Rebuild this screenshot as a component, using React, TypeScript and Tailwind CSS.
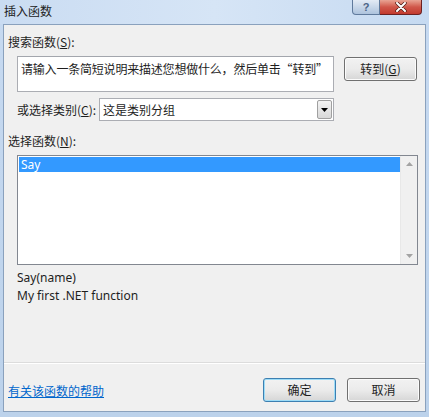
const cjk = "font-['Microsoft_YaHei','Noto_Sans_CJK_SC',sans-serif]";

const Btn = ({ children, focused = false }: { children: React.ReactNode; focused?: boolean }) => (
  <button
    className={`w-[73px] h-[24px] rounded-[3px] border text-[12px] text-[#1e1e1e] bg-gradient-to-b from-[#f2f2f2] via-[#ebebeb] to-[#d6d6d6] ${
      focused ? "border-[#3c7fb1] shadow-[inset_0_0_0_1px_#9ddcf7]" : "border-[#707070] shadow-[inset_0_0_0_1px_#fbfbfb]"
    }`}
  >
    {children}
  </button>
);

export default function App() {
  return (
    <div className={`w-[429px] h-[417px] flex flex-col bg-gradient-to-b from-[#c7daf1] to-[#bcd2eb] ${cjk} text-[12px] text-[#1e1e1e]`}>
      {/* Title bar */}
      <div className="h-[24px] flex items-start justify-between pl-[4px] pr-[7px] bg-gradient-to-r from-[#cadcf2] via-[#d6e5f6] to-[#c6daf1]">
        <span className="mt-[3px] leading-[16px] text-[12px] text-[#222]">插入函数</span>
        <div className="flex">
          <div className="w-[28px] h-[15px] rounded-bl-[4px] border border-t-0 border-[#5f7a9c] bg-gradient-to-b from-[#e3ebf5] to-[#adc3dd] flex items-center justify-center text-[11px] font-bold text-[#4b6486] leading-none font-['Liberation_Sans',sans-serif]">
            ?
          </div>
          <div className="w-[42px] h-[15px] rounded-br-[4px] border border-t-0 border-l-0 border-[#6b2121] bg-gradient-to-b from-[#e8a494] via-[#d0574a] to-[#c23a2e] flex items-center justify-center">
            <svg width="12" height="10" viewBox="0 0 12 10">
              <path d="M2 1 L10 9 M10 1 L2 9" stroke="#4a1a14" strokeWidth="3.4" strokeLinecap="round" />
              <path d="M2 1 L10 9 M10 1 L2 9" stroke="#ffffff" strokeWidth="2" strokeLinecap="round" />
            </svg>
          </div>
        </div>
      </div>

      {/* Client area */}
      <div className="flex-1 mx-[3px] mb-[5px] border border-[#8aa1bd] bg-[#f0f0f0] flex flex-col pl-[4px] pr-[4px]">
        <div className="mt-[9px] leading-[16px]">
          搜索函数(<span className="underline">S</span>):
        </div>

        <div className="mt-[6px] ml-[9px] flex items-start">
          <div className="w-[317px] h-[36px] bg-white border border-[#abadb3] border-t-[#a3a6ad] pl-[3px] pt-[4px] leading-[16px] tracking-[-0.2px]">
            请输入一条简短说明来描述您想做什么，然后单击“转到”
          </div>
          <div className="ml-[10px] mt-[1px]">
            <Btn>
              转到(<span className="underline">G</span>)
            </Btn>
          </div>
        </div>

        <div className="mt-[6px] ml-[9px] flex items-center">
          <span className="w-[82px] leading-[16px]">
            或选择类别(<span className="underline">C</span>):
          </span>
          <div className="w-[235px] h-[23px] bg-white border border-[#abadb3] flex items-center justify-between">
            <span className="pl-[3px] leading-[16px]">这是类别分组</span>
            <div className="w-[15px] h-[19px] mr-[1px] border border-[#a0a0a0] rounded-[2px] bg-gradient-to-b from-[#f4f4f4] to-[#d8d8d8] flex items-center justify-center">
              <svg width="7" height="4" viewBox="0 0 7 4">
                <path d="M0 0 L7 0 L3.5 4 Z" fill="#000" />
              </svg>
            </div>
          </div>
        </div>

        <div className="mt-[12px] leading-[16px]">
          选择函数(<span className="underline">N</span>):
        </div>

        <div className="mt-[6px] ml-[9px] w-[401px] h-[110px] border border-[#828790] bg-white flex">
          <div className="flex-1 pt-[1px] pl-[1px]">
            <div className="h-[15px] bg-[#3399ff] text-white leading-[15px] pl-[2px] font-['Noto_Sans','Liberation_Sans',sans-serif] text-[12px]">
              Say
            </div>
          </div>
          <div className="w-[17px] bg-[#f0f0f0] border-l border-[#e8e8e8] flex flex-col justify-between items-center py-[6px]">
            <svg width="7" height="4" viewBox="0 0 7 4">
              <path d="M0 4 L7 4 L3.5 0 Z" fill="#a3a3a3" />
            </svg>
            <svg width="7" height="4" viewBox="0 0 7 4">
              <path d="M0 0 L7 0 L3.5 4 Z" fill="#a3a3a3" />
            </svg>
          </div>
        </div>

        <div className="mt-[4px] ml-[9px] leading-[18px] font-['Noto_Sans','Liberation_Sans',sans-serif] text-[12px] text-[#1e1e1e]">
          <div>Say(name)</div>
          <div>My first .NET function</div>
        </div>

        <div className="mt-[57px] -mx-[4px] border-t border-[#dcdcdc] border-b border-b-white" />

        <div className="mt-[14px] flex items-center">
          <a className="text-[#0066cc] underline leading-[16px] mt-[2px] cursor-pointer">有关该函数的帮助</a>
          <div className="ml-auto flex gap-[11px] mr-[1px]">
            <Btn focused>确定</Btn>
            <Btn>取消</Btn>
          </div>
        </div>
      </div>
    </div>
  );
}
